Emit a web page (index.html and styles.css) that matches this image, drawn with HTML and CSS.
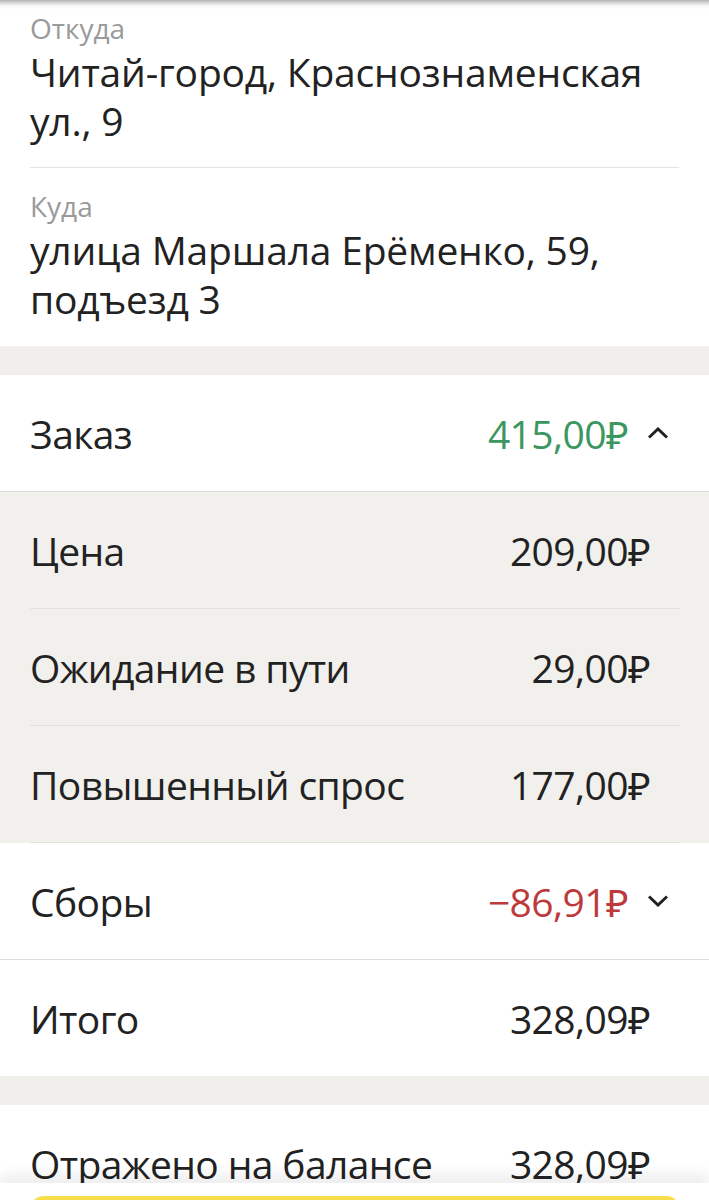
FILE: index.html
```html
<!DOCTYPE html>
<html lang="ru">
<head>
<meta charset="utf-8">
<link rel="stylesheet" href="styles.css">
</head>
<body>
<div class="top-shadow"></div>
<section class="addresses">
  <div class="addr">
    <div class="addr-label">Откуда</div>
    <div class="addr-value">Читай-город, Краснознаменская ул., 9</div>
  </div>
  <div class="addr addr-second">
    <div class="addr-label">Куда</div>
    <div class="addr-value">улица Маршала Ерёменко, 59, подъезд 3</div>
  </div>
</section>
<div class="band"></div>
<section class="card">
  <div class="row row-full">
    <span class="name">Заказ</span>
    <span class="amount green">415,00₽</span>
    <svg class="chev" width="22" height="12" viewBox="0 0 22 12"><path d="M2 10.5 L11 2 L20 10.5" fill="none" stroke="#222" stroke-width="3"/></svg>
  </div>
  <div class="details">
    <div class="row row-inset">
      <span class="name">Цена</span>
      <span class="amount plain">209,00₽</span>
    </div>
    <div class="row row-inset">
      <span class="name">Ожидание в пути</span>
      <span class="amount plain">29,00₽</span>
    </div>
    <div class="row row-inset">
      <span class="name">Повышенный спрос</span>
      <span class="amount plain">177,00₽</span>
    </div>
  </div>
  <div class="row row-full">
    <span class="name">Сборы</span>
    <span class="amount red">−86,91₽</span>
    <svg class="chev" width="22" height="12" viewBox="0 0 22 12"><path d="M2 1.5 L11 10 L20 1.5" fill="none" stroke="#222" stroke-width="3"/></svg>
  </div>
  <div class="row">
    <span class="name">Итого</span>
    <span class="amount plain">328,09₽</span>
  </div>
</section>
<div class="band"></div>
<section class="card">
  <div class="row">
    <span class="name">Отражено на балансе</span>
    <span class="amount plain">328,09₽</span>
  </div>
</section>
<div class="bottom-panel"><div class="yellow-btn"></div></div>
</body>
</html>
```

FILE: styles.css
```css
html, body {
  margin: 0;
  padding: 0;
  background: #ffffff;
}
body {
  font-family: "Open Sans", "Noto Sans", sans-serif;
  color: #222222;
  overflow: hidden;
}
.top-shadow {
  position: fixed;
  top: 0;
  left: 0;
  right: 0;
  height: 9px;
  background: linear-gradient(to bottom, rgba(120,120,120,0.55), rgba(200,200,200,0.2) 60%, rgba(255,255,255,0));
}
.addresses {
  padding: 0 30px;
}
.addr {
  padding: 11px 0 22px;
  border-bottom: 1px solid #e4e4e4;
}
.addr-second {
  padding-top: 21px;
  padding-bottom: 23px;
  border-bottom: none;
}
.addr-label {
  font-size: 28px;
  line-height: 34px;
  color: #9a9a9a;
  margin-bottom: 2px;
}
.addr-value {
  font-size: 39px;
  line-height: 49px;
  color: #222222;
  letter-spacing: -0.2px;
}
.band {
  height: 29px;
  background: #f0efec;
}
.card {
  background: #ffffff;
}
.row {
  height: 116px;
  display: flex;
  align-items: center;
  padding: 0 30px;
  font-size: 39px;
  letter-spacing: -0.6px;
}
.row-full {
  border-bottom: 1px solid #dedede;
}
.details {
  background: #f1f0ed;
}
.row-inset {
  margin: 0 29px 0 30px;
  padding: 0;
  border-bottom: 1px solid #e2e1de;
}
.name {
  flex: 1;
}
.amount.plain {
  margin-right: 29px;
}
.row-inset .amount.plain {
  margin-right: 30px;
}
.green {
  color: #3c9660;
}
.red {
  color: #bd3a3c;
}
.chev {
  margin-left: 19px;
  margin-right: 10px;
  display: block;
}
.bottom-panel {
  position: fixed;
  left: 0;
  right: 0;
  bottom: 0;
  height: 17px;
  background: #ffffff;
  box-shadow: 0 -8px 14px rgba(0,0,0,0.08);
}
.yellow-btn {
  margin: 13px 29px 0 30px;
  height: 30px;
  border-radius: 14px;
  background: #f6de4b;
}
```
